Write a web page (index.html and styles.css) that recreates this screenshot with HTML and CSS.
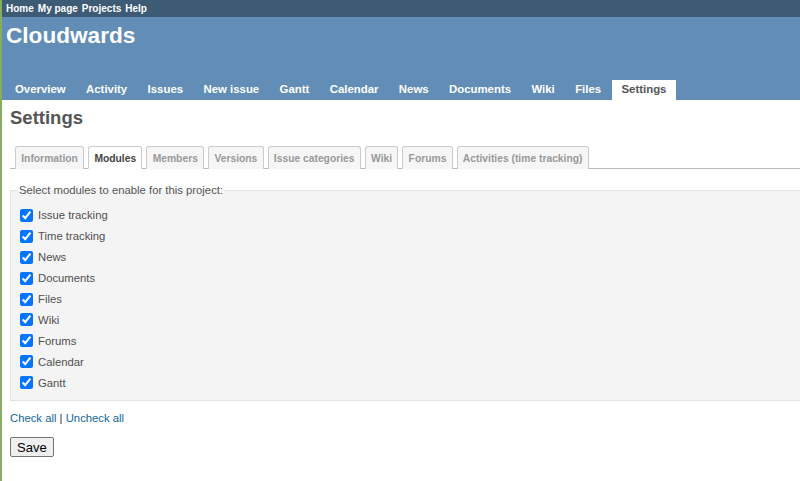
FILE: index.html
```html
<!DOCTYPE html>
<html>
<head>
<meta charset="utf-8">
<link rel="stylesheet" href="styles.css">
</head>
<body>
<div class="page">
  <div class="top-menu">
    <a href="#">Home</a><a href="#">My page</a><a href="#">Projects</a><a href="#">Help</a>
  </div>
  <div class="header">
    <h1>Cloudwards</h1>
    <ul class="main-menu">
      <li><a href="#">Overview</a></li>
      <li><a href="#">Activity</a></li>
      <li><a href="#">Issues</a></li>
      <li><a href="#">New issue</a></li>
      <li><a href="#">Gantt</a></li>
      <li><a href="#">Calendar</a></li>
      <li><a href="#">News</a></li>
      <li><a href="#">Documents</a></li>
      <li><a href="#">Wiki</a></li>
      <li><a href="#">Files</a></li>
      <li><a href="#" class="selected">Settings</a></li>
    </ul>
  </div>
  <div class="content">
    <h2>Settings</h2>
    <ul class="tabs">
      <li><a href="#">Information</a></li>
      <li><a href="#" class="selected">Modules</a></li>
      <li><a href="#">Members</a></li>
      <li><a href="#">Versions</a></li>
      <li><a href="#">Issue categories</a></li>
      <li><a href="#">Wiki</a></li>
      <li><a href="#">Forums</a></li>
      <li><a href="#">Activities (time tracking)</a></li>
    </ul>
    <fieldset class="box">
      <legend>Select modules to enable for this project:</legend>
      <label class="mod"><input type="checkbox" checked> Issue tracking</label>
      <label class="mod"><input type="checkbox" checked> Time tracking</label>
      <label class="mod"><input type="checkbox" checked> News</label>
      <label class="mod"><input type="checkbox" checked> Documents</label>
      <label class="mod"><input type="checkbox" checked> Files</label>
      <label class="mod"><input type="checkbox" checked> Wiki</label>
      <label class="mod"><input type="checkbox" checked> Forums</label>
      <label class="mod"><input type="checkbox" checked> Calendar</label>
      <label class="mod"><input type="checkbox" checked> Gantt</label>
    </fieldset>
    <p class="checks"><a href="#">Check all</a> | <a href="#">Uncheck all</a></p>
    <button class="save">Save</button>
  </div>
</div>
</body>
</html>
```

FILE: styles.css
```css
html, body {
  margin: 0;
  padding: 0;
  height: 100%;
  overflow: hidden;
}
body {
  font-family: "Liberation Sans", Arial, sans-serif;
  font-size: 11.3px;
  color: #333;
  background: #fff;
}
.page {
  border-left: 2px solid #86ad5f;
  min-height: 100%;
  box-sizing: border-box;
}
.top-menu {
  background: #3e5b76;
  height: 17px;
  padding-left: 4px;
  display: flex;
  gap: 4px;
  align-items: center;
}
.top-menu a {
  color: #fff;
  font-size: 10px;
  font-weight: bold;
  text-decoration: none;
}
.header {
  background: #628db6;
  height: 83px;
  display: flex;
  flex-direction: column;
  justify-content: space-between;
}
.header h1 {
  margin: 0;
  padding: 5px 0 0 4px;
  color: #fff;
  font-size: 22.6px;
  font-weight: bold;
  line-height: 28px;
}
.main-menu {
  list-style: none;
  margin: 0;
  padding: 0 0 0 3px;
  display: flex;
}
.main-menu li a {
  display: block;
  color: #fff;
  font-weight: bold;
  font-size: 11.4px;
  text-decoration: none;
  padding: 3px 10px 4px 10px;
  line-height: 13px;
  margin-right: 0.4px;
}
.main-menu li a.selected {
  background: #fff;
  color: #555;
}
.content {
  padding: 0 0 0 8px;
  margin-right: -10px;
}
.content h2 {
  margin: 7px 0 0 0;
  font-size: 18.5px;
  line-height: 22px;
  color: #555;
  font-weight: bold;
}
.tabs {
  list-style: none;
  margin: 17px 0 0 0;
  padding: 0 0 0 1px;
  display: flex;
  border-bottom: 1px solid #bbb;
  height: 22px;
  align-items: flex-end;
}
.tabs li a {
  display: block;
  margin-left: 4px;
  padding: 5px 5.25px 4px 5.25px;
  line-height: 13px;
  font-size: 10.3px;
  font-weight: bold;
  color: #999;
  background: #f6f6f6;
  border: 1px solid #ccc;
  border-bottom: none;
  border-radius: 3px 3px 0 0;
  text-decoration: none;
  position: relative;
  top: 1px;
}
.tabs li a.selected {
  background: #fff;
  color: #444;
  border-bottom: 1px solid #fff;
  padding-bottom: 3px;
}
.box {
  margin: 15px 0 0 0;
  padding: 9px 8px 7px 7px;
  background: #f4f4f4;
  border: 1px solid #e2e2e2;
  color: #505050;
}
.box legend {
  font-size: 11.3px;
  color: #555;
  padding: 0 2px;
  margin-left: -1px;
}
.mod {
  display: flex;
  align-items: center;
  height: 20.9px;
  font-size: 11.3px;
  color: #505050;
}
.mod input {
  margin: 0 5px 0 2px;
  width: 13px;
  height: 13px;
}
.checks {
  margin: 10px 0 0 0;
  color: #333;
  line-height: 14px;
}
.checks a {
  color: #169;
  text-decoration: none;
}
.save {
  margin-top: 12px;
  font-family: "Liberation Sans", Arial, sans-serif;
  font-size: 13px;
  padding: 1px 6px;
  height: 20px;
  color: #000;
  background: #efefef;
  border: 1px solid #767676;
  border-radius: 2px;
}
```
